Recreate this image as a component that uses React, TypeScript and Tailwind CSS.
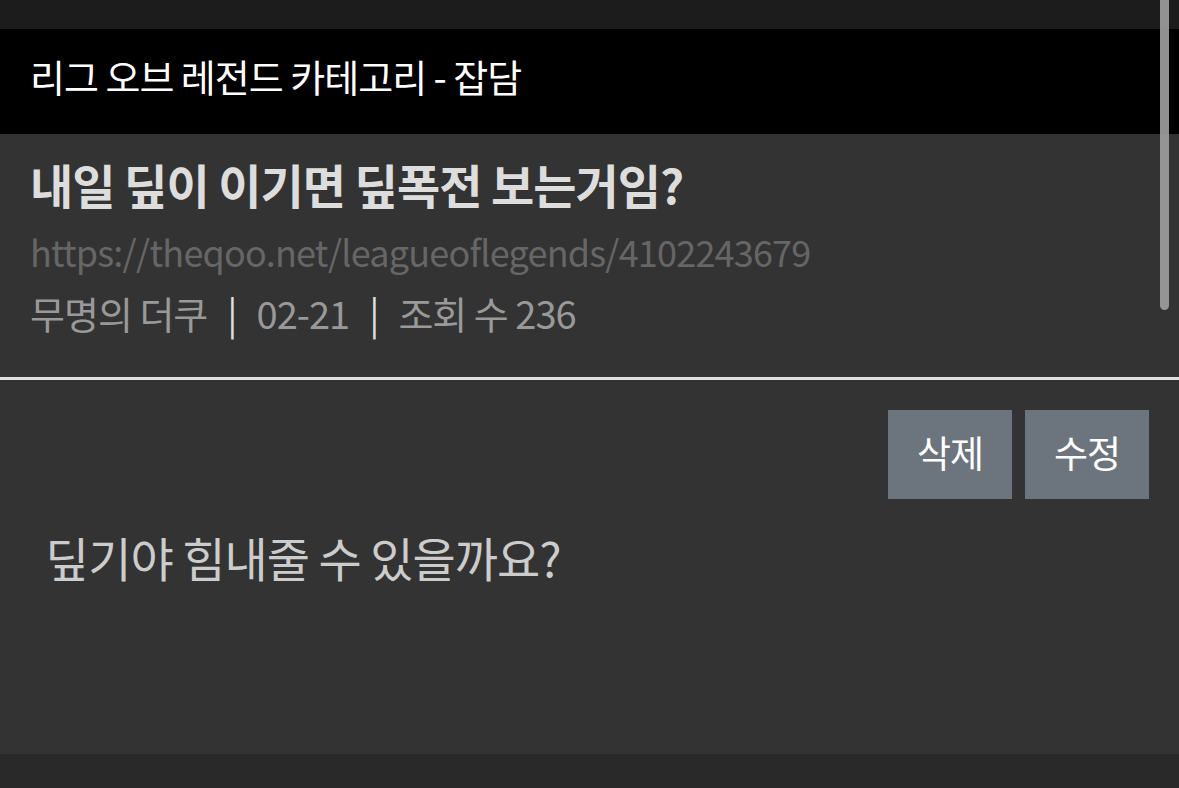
export default function App() {
  return (
    <div
      className="relative h-[788px] w-full overflow-hidden bg-[#333333]"
      style={{ fontFamily: '"Noto Sans CJK KR", "Noto Sans", sans-serif' }}
    >
      <div className="h-[29px] bg-[#1c1c1c]" />
      <div className="flex h-[105px] items-center bg-black px-[30px] pb-[12px]">
        <h2 className="text-[38px] font-normal leading-none tracking-[-1px] text-white">
          리그 오브 레전드 카테고리 - 잡담
        </h2>
      </div>

      <div className="h-[243px] bg-[#333333] px-[30px] pt-[20px]">
        <h1 className="text-[47px] font-bold leading-[60px] tracking-[-1px] text-[#dddddd]">
          내일 딮이 이기면 딮폭전 보는거임?
        </h1>
        <div className="mt-[6px] text-[36px] leading-[62px] tracking-[-0.8px] text-[#666666]">
          https://theqoo.net/leagueoflegends/4102243679
        </div>
        <div className="flex items-center text-[38px] leading-[62px] tracking-[-1px] text-[#999999]">
          <span>무명의 더쿠</span>
          <span className="mx-[20px] text-[#dddddd]">|</span>
          <span>02-21</span>
          <span className="mx-[20px] text-[#dddddd]">|</span>
          <span>조회 수 236</span>
        </div>
      </div>

      <div className="h-[3px] bg-[#e0e0e0]" />

      <div className="h-[374px] bg-[#333333] px-[30px]">
        <div className="flex justify-end gap-[13px] pt-[30px]">
          <button className="h-[89px] w-[124px] bg-[#6c757d] pb-[4px] text-[37px] tracking-[-1px] text-white">
            삭제
          </button>
          <button className="h-[89px] w-[124px] bg-[#6c757d] pb-[4px] text-[37px] tracking-[-1px] text-white">
            수정
          </button>
        </div>
        <p className="mt-[25px] pl-[16px] text-[47px] leading-[66px] tracking-[-1px] text-[#cccccc]">
          딮기야 힘내줄 수 있을까요?
        </p>
      </div>

      <div className="h-[34px] bg-[#292929]" />

      <div className="absolute right-[10px] top-0 h-[310px] w-[9px] rounded-b-full bg-[#a0a0a0]/90" />
    </div>
  );
}
